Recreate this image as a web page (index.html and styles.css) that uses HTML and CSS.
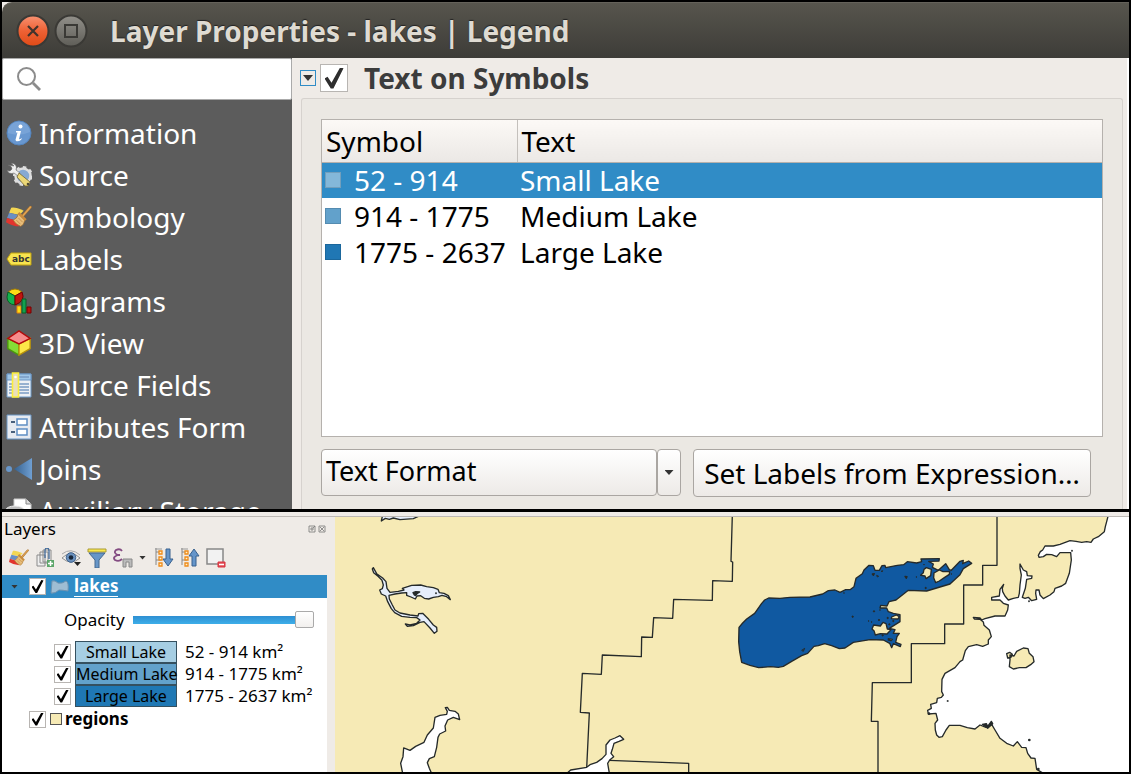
FILE: index.html
```html
<!DOCTYPE html>
<html lang="en">
<head>
<meta charset="utf-8">
<title>Layer Properties - lakes | Legend</title>
<link rel="stylesheet" href="styles.css">
</head>
<body>
<svg class="defs" width="0" height="0" aria-hidden="true">
  <defs>
    <linearGradient id="red" x1="0" y1="0" x2="0" y2="1"><stop offset="0" stop-color="#f79272"/><stop offset=".5" stop-color="#ee6134"/><stop offset="1" stop-color="#df4a16"/></linearGradient>
    <linearGradient id="gray" x1="0" y1="0" x2="0" y2="1"><stop offset="0" stop-color="#92908a"/><stop offset="1" stop-color="#5e5d57"/></linearGradient>
    <linearGradient id="join" x1="0" y1="0" x2="1" y2="0"><stop offset="0" stop-color="#36618f"/><stop offset="1" stop-color="#6f9fd2"/></linearGradient>
    <symbol id="brush" viewBox="0 0 25 22">
      <path d="M5 2Q9 1 17 5L13 9 3 7Z" fill="#f3d653"/><path d="M3 7 12 9 8 14 1 12Z" fill="#6a8fc4"/><path d="M1 12 8 14 13 20Q6 20 0 16Z" fill="#e2342d"/>
      <path d="M12 8 18 14Q17 19 14 20 9 18 7 14 11 12 12 8Z" fill="#e8bd79" stroke="#a8732f" stroke-width=".7"/><path d="m10 14 4 4M12 12l4 4" stroke="#b98340" stroke-width=".7"/>
      <path d="m16 10 7.500-8.500" stroke="#a8732f" stroke-width="2.600" stroke-linecap="round"/><path d="m16 10 7.500-8.500" stroke="#e0a354" stroke-width="1.500" stroke-linecap="round"/>
      <path d="m12 7 7 7" stroke="#c98c3d" stroke-width="2.400"/>
    </symbol>
    <symbol id="tree" viewBox="0 0 20 20"><path d="M2 0V17M2 4H7M2 12H7" fill="none" stroke="#888"/><path d="M5 3h3v3H5zM5 9h3v3H5zM5 15h3v3H5z" fill="#fff3d0" stroke="#ef8b18" stroke-width="1.300"/><path d="M1 1h7" stroke="#999"/></symbol>
  </defs>
</svg>
<div class="screen">
  <section class="dialog">
    <header class="titlebar">
      <button class="winbtn" aria-label="Close"><svg viewBox="0 0 34 34"><circle cx="17" cy="17" r="15.500" fill="url(#red)" stroke="#3a3935" stroke-width="2"/><path d="m12 12 10 10M22 12 12 22" stroke="#41332c" stroke-width="2.200"/></svg></button>
      <button class="winbtn" aria-label="Maximize"><svg viewBox="0 0 34 34"><circle cx="17" cy="17" r="15.500" fill="url(#gray)" stroke="#3a3935" stroke-width="2"/><path d="M11 11h12v12H11z" fill="none" stroke="#3a3935" stroke-width="2"/></svg></button>
      <h1>Layer Properties - lakes | Legend</h1>
    </header>
    <div class="dialog-body">
      <aside class="sidebar">
        <label class="search"><svg viewBox="0 0 26 26" aria-hidden="true"><circle cx="10.500" cy="10.500" r="8.500" fill="none" stroke="#8c8c8c" stroke-width="2"/><path d="m17 17 7 7" stroke="#8c8c8c" stroke-width="2.800"/></svg><input type="text" aria-label="Search"></label>
        <nav>
          <a href="#information"><svg viewBox="0 0 26 26"><circle cx="13" cy="13" r="12" fill="#6897d0" stroke="#5484bd"/><path d="M2 13A11 11 0 0 1 24 12Q13 17 2 13" fill="#83abdc" opacity=".6"/><circle cx="14.500" cy="6.500" r="2" fill="#fff"/><path d="M10 11h5l-2 8q0 1 3-1l-1 2q-3 2-5 1-1-1 0-3l1.500-5.500H10Z" fill="#fff"/></svg>Information</a>
          <a href="#source"><svg viewBox="0 0 26 26"><circle cx="17" cy="14" r="7.500" fill="#86a9d2" stroke="#dedede" stroke-width="2.500"/><circle cx="17" cy="14" r="9" fill="none" stroke="#dedede" stroke-width="2" stroke-dasharray="3.500 3.500"/><path d="M2 3Q6 4 6 7L4 9Q2 9 1 8 3 13 8 11L12 14 14 11 10 8Q12 2 5 1L8 4Z" fill="#eee" stroke="#666" stroke-width=".6"/><path d="m13 11 11 9-2 4-3 0L11 15Z" fill="#ecd877" stroke="#75652e" stroke-width=".8"/><circle cx="22" cy="22" r="1.300" fill="#514b34"/></svg>Source</a>
          <a href="#symbology"><svg viewBox="0 0 25 22"><use href="#brush"/></svg>Symbology</a>
          <a href="#labels"><svg viewBox="0 0 26 26"><path d="m1 13 4-6h20v12H5Z" fill="#f7e34f" stroke="#c2a311"/><text class="abc" x="6" y="16">abc</text></svg>Labels</a>
          <a href="#diagrams"><svg viewBox="0 0 26 26"><path d="M9 8 2 4Q9-2 16 4Z" fill="#fddc16" stroke="#a27b08"/><path d="M9 8V17Q1 16 1 9L2 4Z" fill="#13b34d" stroke="#075f25"/><path d="M9 8 16 4Q20 13 9 17Z" fill="#be1610" stroke="#700"/><path d="M11 18h4v7h-4z" fill="#fddc16" stroke="#e4820c"/><path d="M16 11h4v14h-4z" fill="#13a050" stroke="#075f25"/><path d="M21 19h4v6h-4z" fill="#b7120d" stroke="#700"/></svg>Diagrams</a>
          <a href="#view3d"><svg viewBox="0 0 26 28"><path d="M1 9 13 15V27L1 20Z" fill="#85dd36" stroke="#4b9b0b" stroke-width="1.500"/><path d="M25 9 13 15V27L25 20Z" fill="#fde748" stroke="#b9930a" stroke-width="1.500"/><path d="M13 1 25 9 13 15 1 9Z" fill="#f78c8c" stroke="#b30c0c" stroke-width="1.500"/></svg>3D View</a>
          <a href="#fields"><svg viewBox="0 0 26 26"><path d="M1 2h24v23H1z" fill="#eef1f5" stroke="#6f9ac8"/><path d="M1 2h24v6H1z" fill="#9fc6e8" stroke="#6b96c5"/><path d="M13 5h10M13 12h10M13 15h10M13 18h10M13 21h10M3 12h3M3 15h3M3 18h3M3 21h3" stroke="#7b9cc4" stroke-width="1.300"/><path d="M6.500 1h6v24h-6z" fill="#e9dfba" stroke="#fbee3a" stroke-width="1.600"/><circle cx="9.500" cy="5" r="1.300" fill="#fff"/></svg>Source Fields</a>
          <a href="#form"><svg viewBox="0 0 26 26"><path d="M1 1h24v24H1z" fill="#e6eaf0" stroke="#6b96c5"/><path d="M5 8h4M5 18h4" stroke="#48607c" stroke-width="2"/><path d="M11 5h10v6H11zM11 15h10v6H11z" fill="#fff" stroke="#5f8fc4" stroke-width="1.500"/></svg>Attributes Form</a>
          <a href="#joins"><svg viewBox="0 0 26 26"><circle cx="3" cy="13" r="3" fill="#6897cb"/><path d="M8 13 26 2v22Z" fill="url(#join)"/></svg>Joins</a>
          <a href="#auxiliary"><svg viewBox="0 0 26 26"><path d="M8 1h12l5 5v19H8z" fill="#fff" stroke="#ccc"/><path d="M20 1v5h5" fill="#ddd" stroke="#888"/><ellipse cx="9" cy="12" rx="9" ry="4" fill="#bdbdbd" stroke="#eee"/></svg>Auxiliary Storage</a>
        </nav>
      </aside>
      <main class="panel">
        <div class="group-head">
          <button class="collapse" aria-label="Collapse group"><i class="tri"></i></button>
          <input class="check big" type="checkbox" id="textsym" checked>
          <label for="textsym">Text on Symbols</label>
        </div>
        <div class="group">
          <div class="table-wrap">
            <table>
              <colgroup><col class="c1"><col></colgroup>
              <thead><tr><th>Symbol</th><th>Text</th></tr></thead>
              <tbody>
                <tr class="selected"><td><i class="swatch s1"></i>52 - 914</td><td>Small Lake</td></tr>
                <tr><td><i class="swatch s2"></i>914 - 1775</td><td>Medium Lake</td></tr>
                <tr><td><i class="swatch s3"></i>1775 - 2637</td><td>Large Lake</td></tr>
              </tbody>
            </table>
          </div>
          <div class="actions">
            <button class="btn format">Text Format</button><button class="btn arrow" aria-label="Text format options"><i class="tri"></i></button>
            <button class="btn expr">Set Labels from Expression…</button>
          </div>
        </div>
      </main>
    </div>
  </section>
  <section class="workspace">
    <aside class="layers">
      <header class="dock-title"><h2>Layers</h2>
        <button aria-label="Float"><svg viewBox="0 0 8 8"><path d="M1 1h6v6H1zM3 3h2v2H3zM5 3l2-2" fill="none" stroke="#777" stroke-width=".8"/></svg></button>
        <button aria-label="Close panel"><svg viewBox="0 0 8 8"><path d="M1 1h6v6H1zM2 2l4 4M6 2 2 6" fill="none" stroke="#777" stroke-width=".8"/></svg></button>
      </header>
      <div class="toolbar">
        <button aria-label="Open styling panel"><svg viewBox="0 0 25 22"><use href="#brush"/></svg></button>
        <button aria-label="Add group"><svg viewBox="0 0 20 20"><path d="M2 7h8v11H2zM5 4h8v11H5zM8 2h8v12H8z" fill="#eee" stroke="#8a8a8a"/><path d="M10 10V3q0-3 2-3t2 3v8" fill="none" stroke="#426b9a" stroke-width="1.300"/><path d="M12 12h7v7h-7z" fill="#5da66a"/><path d="M15.500 13v5M13 15.500h5" stroke="#fff" stroke-width="1.500"/></svg></button>
        <button aria-label="Manage map themes"><svg viewBox="0 0 20 20"><path d="M1 10Q10 1 19 10 10 18 1 10Z" fill="#f4f4f2" stroke="#8f8f8f"/><path d="M1 6Q10-1 19 7" fill="none" stroke="#aaa"/><circle cx="10" cy="9.500" r="4.800" fill="#6b92bf" stroke="#3e618b"/><circle cx="10" cy="9.500" r="2.300" fill="#172538"/><path d="M13 14h7l-3.500 4Z" fill="#222"/></svg></button>
        <button aria-label="Filter legend"><svg viewBox="0 0 20 20"><path d="M1 1h18v3H1z" fill="#fae84b" stroke="#a99a37"/><path d="M2 5h16l-6 7v8H8v-8Z" fill="#6796c8" stroke="#45698f"/></svg></button>
        <button aria-label="Filter by expression"><svg viewBox="0 0 20 20"><path d="M9 3Q7 0 3 2 0 5 5 7q-6 2-3 5 4 2 7-1M4 7h3" fill="none" stroke="#844c82" stroke-width="1.800"/><path d="M10 11h9v8h-3v-5h-3v5h-3Z" fill="#bbb" stroke="#888"/></svg></button>
        <button class="more" aria-label="Expression options"><i class="tri"></i></button>
        <button aria-label="Expand all"><svg viewBox="0 0 20 20"><use href="#tree"/><path d="M12 1h4v10h3l-5 7-5-7h3Z" fill="#6595ca" stroke="#38618e"/></svg></button>
        <button aria-label="Collapse all"><svg viewBox="0 0 20 20"><use href="#tree"/><path d="M12 18h4V8h3l-5-7-5 7h3Z" fill="#6595ca" stroke="#38618e"/></svg></button>
        <button aria-label="Remove layer"><svg viewBox="0 0 20 20"><path d="M1 1h16v15H1z" fill="#f2f2f2" stroke="#888" stroke-width="1.500"/><path d="M12 14h7v5h-7z" fill="#e34a54" stroke="#d83440"/><path d="M13 16.500h5" stroke="#fff" stroke-width="1.500"/></svg></button>
      </div>
      <div class="tree">
        <div class="row lake-row"><i class="tri"></i><input class="check" type="checkbox" id="lakes" checked><svg class="poly" viewBox="0 0 19 14"><path d="M2 1Q5 0 8 3 12 4 16 1 19 2 18 11 12 10 9 10 5 14 1 13Z" fill="#9fbdd3" stroke="#6e92b0"/></svg><label for="lakes">lakes</label></div>
        <div class="row opacity"><label for="opacity">Opacity</label><input type="range" id="opacity" min="0" max="100" value="100"></div>
        <div class="row item"><input class="check" type="checkbox" id="small" checked><label for="small"><span class="patch p1">Small Lake</span>52 - 914 km²</label></div>
        <div class="row item"><input class="check" type="checkbox" id="medium" checked><label for="medium"><span class="patch p2">Medium Lake</span>914 - 1775 km²</label></div>
        <div class="row item"><input class="check" type="checkbox" id="large" checked><label for="large"><span class="patch p3">Large Lake</span>1775 - 2637 km²</label></div>
        <div class="row regions"><input class="check" type="checkbox" id="regions" checked><i></i><label for="regions">regions</label></div>
      </div>
    </aside>
    <svg class="map" viewBox="335 517 794 255" preserveAspectRatio="xMidYMid slice" role="img" aria-label="Map of lakes and regions">
      <path fill="#f6eab5" d="M335 517h794v255H335z"/>
      <g fill="none" stroke="#252a2a" stroke-width="4" stroke-linejoin="round">
        <g transform="translate(860 510) scale(.33333)">
          <path fill="#fff" d="M745 15 740 35 736 50 733 65 715 80 700 87 693 97 680 95 665 97 648 94 630 92 600 103 580 108 555 108 548 120 541 125 535 136 537 142 550 140 560 133 575 134 590 140 600 128 632 128 634 150 628 190 617 220 605 228 585 235 582 245 570 255 550 266 540 255 537 240 528 240 527 250 530 268 515 272 505 262 495 265 487 262 496 235 500 208 515 205 516 198 502 197 500 185 490 180 480 162 480 175 484 195 480 225 478 250 475 262 460 265 445 270 435 258 428 245 427 235 431 223 420 238 418 258 395 262 395 270 420 270 430 280 445 285 443 300 435 318 405 318 375 326 365 330 360 324 340 322 343 327 360 328 370 336 372 346 388 360 394 380 385 390 385 402 368 409 350 404 325 410 316 422 308 450 300 455 285 473 255 490 246 508 245 545 250 555 244 562 232 565 230 578 212 583 214 595 203 601 205 612 228 610 233 630 225 640 226 660 230 675 237 682 247 680 258 660 268 646 300 646 322 653 345 657 360 645 378 652 395 643 405 660 420 685 440 700 460 708 472 695 485 712 498 713 503 730 513 744 525 745 530 778 550 790H840V15Z"/>
          <path d="M411 15V166H368V225H311V342H254V401H154V518H37L34 634H54V795"/>
          <path fill="#f6eab5" d="M450 435 462 438 470 424 490 414 504 416 508 430 519 440 522 455 512 464 498 473 478 473 460 477 448 470 450 450ZM440 431l9-4 8 6-4 9-10 2Z"/>
          <g fill="#252a2a"><circle cx="508" cy="690" r="2"/><circle cx="263" cy="573" r="1"/><circle cx="636" cy="122" r="1"/><circle cx="507" cy="274" r="1"/><path d="m367 643 12-2 4 8 11-15 4 7-15 14Z"/><circle cx="207" cy="611" r="2"/><circle cx="535" cy="777" r="2"/></g>
        </g>
        <g transform="translate(560 510) scale(.33333)">
          <path d="M517 15 513 154 518 156 517 214 458 212 457 271 341 268 338 325 281 323 277 382 245 381 244 440 127 435 124 493 67 490 61 607 88 609 80 775M148 751 386 760V795"/>
          <path fill="#fff" d="M15 795 32 780 80 772 90 764 110 757 126 746 138 733 138 705 150 690 165 684 180 677 191 688 177 694 162 700 157 718 153 730 161 740 149 750 143 760 149 795Z"/>
        </g>
        <g transform="translate(330 510) scale(.33333)">
          <path fill="#fff" d="M219 795 212 760 219 740 221 714 240 721 257 709 282 697 292 675 310 654 315 622 330 616 350 613 352 604 346 593 352 592 358 601 375 604 385 612 389 629 370 622 353 630 345 648 347 663 329 672 324 682 320 712 313 740 298 746 292 758 298 775 307 795Z"/>
          <path fill="#e6eefb" d="M130 173 127 177 131 188 144 199 156 211 160 225 157 236 149 240 154 252 167 258 173 275 184 296 194 308 215 319 240 322 260 323 270 330 260 340 240 345 226 342 232 349 250 347 270 337 282 335 300 354 313 370 321 364 320 352 310 345 296 328 278 310 266 311 264 318 240 315 210 309 195 300 187 285 178 267 177 256 195 252 215 249 230 248 230 256 243 261 256 267 261 258 272 257 283 265 296 267 310 262 325 260 336 256 350 260 361 269 355 257 342 250 328 248 324 238 310 233 290 230 272 225 245 226 217 235 222 240 205 244 180 247 171 235 168 215 158 204 140 191Z"/>
          <path fill="#252a2a" d="m249 248 8-3 12 1-8 5-4 6-4-2Z"/><circle fill="#252a2a" cx="318" cy="250" r="1"/>
          <path fill="#e6eefb" d="m158 15-4 18 12-8 12 3 12-4 20 5 40-3 24-11"/>
        </g>
        <g transform="translate(720 540) scale(.33333)">
          <path fill="#1059a1" d="M57 262 68 249 80 237 104 220 125 190 134 180 146 174 180 175 210 172 270 171 308 162 325 152 345 150 360 157 377 149 390 149 402 140 408 115 427 101 432 90 447 76 460 77 465 91 478 91 486 77 495 76 497 83 532 76 551 74 562 65 590 69 605 65 603 57 658 56 657 63 626 64 640 72 637 82 655 91 677 71 688 89 694 91 720 64 730 61 728 71 746 63 755 70 730 86 720 104 690 132 650 144 620 153 565 151 528 180 507 185 501 198 482 196 480 204 500 204 505 215 520 220 540 224 540 245 508 265 525 269 520 280 538 280 531 290 527 307 543 313 541 320 520 311 515 323 509 310 490 300 450 299 400 307 375 324 358 326 335 317 314 311 295 317 282 319 263 340 245 347 215 364 190 379 175 382 152 380 116 383 90 376 65 367 59 335 56 305Z"/>
          <g fill="#f6eab5"><path d="m461 255 20 3 8-11 9 4 4 16 11 2-12 13-20-1-15 4-4-13-6-5ZM612 88l7-5 15 5-2 19-14 9-3-8-13-2 8-8ZM642 99l16-9 11 5 20-1-1 9-15 10-15 10-11 5-6-15ZM457 102l6-1-3 5ZM555 109l4 6 2-5ZM515 231l14-6 9 5-4 7-20-1ZM505 296l12 2-4 4-8-2Z"/></g>
          <g fill="#252a2a" stroke-width="3"><path fill="none" d="m245 331 9-6-4 9ZM470 106l6 3-4 2ZM484 93l4-1-2 4Z"/><circle cx="372" cy="159" r="1"/><circle cx="398" cy="230" r="2"/><circle cx="446" cy="243" r="1"/><circle cx="455" cy="246" r="1"/><circle cx="462" cy="214" r="2"/><circle cx="480" cy="210" r="1"/><circle cx="477" cy="240" r="2"/><circle cx="503" cy="234" r="2"/><circle cx="520" cy="243" r="2"/><circle cx="508" cy="253" r="2"/><circle cx="488" cy="286" r="2"/><circle cx="589" cy="111" r="1"/><circle cx="612" cy="74" r="1"/><circle cx="604" cy="105" r="1"/><circle cx="694" cy="102" r="1"/><circle cx="617" cy="144" r="2"/></g>
        </g>
      </g>
    </svg>
  </section>
</div>
</body>
</html>
```
FILE: styles.css
```css
* { box-sizing: border-box; }
body { margin: 0; font-family: "Noto Sans", "Open Sans", sans-serif; color: #000; }
.defs { position: absolute; }
h1, h2 { margin: 0; }
button { padding: 0; border: 0; background: none; color: inherit; font: inherit; }
button svg { display: block; width: 100%; height: 100%; }
.screen { display: grid; grid-template-rows: minmax(0, 507fr) minmax(0, 260fr); gap: 3px; height: 100vh; padding: 2px; background: #000; }
.tri { display: inline-block; width: 10px; height: 6px; background: #333; clip-path: polygon(0 0, 100% 0, 50% 100%); }

.dialog { display: flex; flex-direction: column; min-height: 0; overflow: hidden; background: #efebe7; }
.titlebar { display: flex; flex: none; align-items: center; gap: 4px; height: 56px; padding: 0 14px; border-radius: 10px 0 0; border-top: 1px solid #65625a; background: linear-gradient(#57554d, #3d3c38); }
.winbtn { width: 34px; height: 34px; }
.titlebar h1 { margin-left: 18px; color: #dfdbd2; font-size: 28px; line-height: 36px; text-shadow: 0 -1px 1px #222; white-space: nowrap; }
.dialog-body { display: flex; flex: 1; min-height: 0; }
.sidebar { display: flex; flex-direction: column; flex: 0 0 290px; overflow: hidden; background: #5c5c5c; }
.search { display: flex; flex: none; align-items: center; gap: 8px; height: 42px; padding: 0 13px; border: 1px solid #aaa; border-radius: 2px; background: #fff; }
.search svg { width: 26px; height: 26px; }
.search input { flex: 1; min-width: 0; border: 0; outline: 0; font: inherit; font-size: 20px; }
.sidebar nav { padding-top: 12px; }
.sidebar a { display: flex; align-items: center; gap: 7px; height: 42px; padding-left: 4px; color: #fff; font-size: 28px; line-height: 42px; text-decoration: none; white-space: nowrap; }
.sidebar a svg { flex: none; width: 26px; height: 26px; }
.abc { font-family: "DejaVu Sans", sans-serif; font-size: 9px; font-weight: bold; fill: #333; }

.panel { display: flex; flex: 1; flex-direction: column; min-width: 0; padding: 0 4px 0 8px; border-right: 2px solid #fff; }
.group-head { display: flex; flex: none; align-items: center; height: 40px; color: #3c3c3c; font-size: 28px; font-weight: bold; line-height: 40px; }
.collapse { display: flex; align-items: center; justify-content: center; width: 16px; height: 16px; margin-right: 4px; border: 1px solid #308cc6; }
.group-head label { margin-left: 16px; }
.check { display: grid; flex: none; place-items: center; width: 17px; height: 17px; margin: 0; border: 1px solid #b8b5b2; appearance: none; background: #fff; }
.check:checked::before { width: 12px; height: 13px; background: #000; clip-path: polygon(0 52%, 16% 44%, 37% 73%, 82% 0, 100% 4%, 47% 100%, 33% 100%); content: ""; }
.check.big { width: 28px; height: 28px; }
.check.big:checked::before { width: 19px; height: 21px; background: #2e2e2e; }
.group { display: flex; flex: 1; flex-direction: column; gap: 12px; min-height: 0; margin-left: 1px; padding: 20px 19px 12px 19px; border: 1px solid #d6d2ce; border-bottom: 0; border-radius: 3px 3px 0 0; background: #ebe8e3; }
.table-wrap { flex: 1; min-height: 0; overflow: hidden; border: 1px solid #b5b1ad; background: #fff; }
table { width: 100%; border-collapse: collapse; table-layout: fixed; font-size: 28px; line-height: 36px; }
.c1 { width: 195px; }
th { height: 42px; padding: 0 4px; border-bottom: 1px solid #b5b1ad; background: linear-gradient(#fcf9f6, #ebe8e5); font-weight: normal; line-height: 40px; text-align: left; }
th + th { border-left: 1px solid #c4c0bc; }
td { height: 36px; padding: 0 3px; line-height: 35px; white-space: nowrap; }
.selected { background: #308cc6; color: #fff; }
.swatch { display: inline-block; width: 16px; height: 16px; margin-right: 13px; border: 1px solid #0002; vertical-align: 3px; }
.s1 { background: #84b8d9; }
.s2 { background: #62a1cb; }
.s3 { background: #2077b4; }
.actions { display: flex; flex: none; height: 48px; align-items: flex-start; }
.btn { height: 47px; border: 1px solid #aaa6a2; border-radius: 4px; background: linear-gradient(#fff, #edeae7); white-space: nowrap; }
.format { width: 336px; padding: 0 4px 4px; font-size: 27px; text-align: left; }
.arrow { display: flex; align-items: center; justify-content: center; width: 24px; margin-right: 12px; }
.expr { width: 398px; height: 48px; padding: 0 6px; font-size: 28px; }

.workspace { display: grid; grid-template-columns: 325px minmax(0, 1fr); column-gap: 8px; min-height: 0; padding-top: 5px; background: linear-gradient(#efebe7 4px, #bdb9b5 4px, #bdb9b5 5px, #efebe7 5px); }
.layers { display: flex; flex-direction: column; min-height: 0; }
.dock-title { display: flex; flex: none; align-items: center; gap: 2px; height: 24px; padding: 0 1px 0 2px; }
.dock-title h2 { flex: 1; font-size: 17px; font-weight: normal; line-height: 24px; }
.dock-title button { width: 8px; height: 8px; }
.toolbar { display: flex; flex: none; align-items: center; gap: 6px; height: 34px; padding: 0 7px 1px; }
.toolbar button { flex: none; width: 20px; height: 20px; }
.toolbar .more { display: flex; align-items: center; width: 9px; }
.more .tri, .lake-row .tri { width: 7px; height: 4px; }
.arrow .tri { width: 9px; height: 5px; }
.tree { flex: 1; min-height: 0; overflow: hidden; background: #fff; font-size: 17px; line-height: 22px; white-space: nowrap; }
.row { display: flex; align-items: center; height: 22px; }
.lake-row { height: 23px; padding-left: 9px; background: #308cc6; color: #fff; font-weight: bold; }
.lake-row .check { margin-left: 11px; }
.poly { width: 19px; height: 14px; margin: 0 5px 0 4px; }
.lake-row label { line-height: 20px; border-bottom: 1px solid #fff; }
.opacity { height: 43px; gap: 8px; padding-left: 62px; }
.opacity input { width: 181px; height: 20px; margin: 0; appearance: none; background: linear-gradient(#2e8fd2, #3daee9) center / 100% 8px no-repeat; }
.opacity input::-webkit-slider-thumb { width: 19px; height: 17px; border: 1px solid #aaa; border-radius: 2px; appearance: none; background: linear-gradient(#fff, #f2f0ee); }
.item { padding-left: 52px; }
.item label { display: flex; align-items: center; margin-left: 4px; }
.patch { width: 102px; height: 22px; margin-right: 8px; border: 1px solid #35505f; font-size: 16px; line-height: 20px; text-align: center; }
.p1 { background: #a6cee3; }
.p2 { background: #63a2cb; }
.p3 { background: #1f78b4; }
.regions { height: 24px; padding-left: 27px; font-weight: bold; }
.regions i { width: 12px; height: 12px; margin: 0 3px 0 4px; border: 1px solid #555; background: #f6eab5; }
.map { display: block; width: 100%; height: 100%; }
```
